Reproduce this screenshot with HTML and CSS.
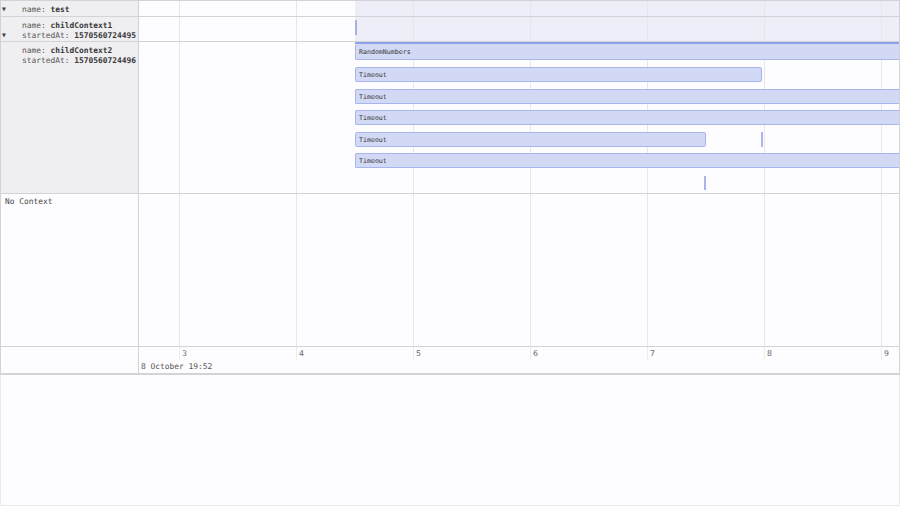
FILE: index.html
```html
<!DOCTYPE html>
<html>
<head>
<meta charset="utf-8">
<link rel="stylesheet" href="styles.css">
</head>
<body>
<div class="page">
  <div class="table">
    <div class="row r1">
      <div class="label">
        <div class="ln"><span class="tog">▼</span>name: <b>test</b></div>
      </div>
      <div class="tl lav"></div>
    </div>
    <div class="row r2">
      <div class="label">
        <div class="ln"><span class="tog"></span>name: <b>childContext1</b></div>
        <div class="ln"><span class="tog">▼</span>startedAt: <b>1570560724495</b></div>
      </div>
      <div class="tl lav">
        <div class="ctx-mark"></div>
      </div>
    </div>
    <div class="row r3">
      <div class="label">
        <div class="ln"><span class="tog"></span>name: <b>childContext2</b></div>
        <div class="ln"><span class="tog"></span>startedAt: <b>1570560724496</b></div>
      </div>
      <div class="tl spans">
        <div class="ctx-line"></div>
        <div class="bar open first">RandomNumbers</div>
        <div class="tracks">
          <div class="track"><div class="bar" style="width:407px">Timeout</div></div>
          <div class="track"><div class="bar open">Timeout</div></div>
          <div class="track"><div class="bar open">Timeout</div></div>
          <div class="track"><div class="bar" style="width:351px">Timeout</div><div class="mark" style="margin-left:55px"></div></div>
          <div class="track"><div class="bar open">Timeout</div></div>
          <div class="track"><div class="mark low" style="margin-left:349px"></div></div>
        </div>
      </div>
    </div>
    <div class="row r4">
      <div class="label plain">
        <div class="ln nc">No Context</div>
      </div>
      <div class="tl"></div>
    </div>
    <div class="row axis">
      <div class="label plain"></div>
      <div class="axis-cell">
        <div class="ticks">
          <div class="tick">3</div>
          <div class="tick">4</div>
          <div class="tick">5</div>
          <div class="tick">6</div>
          <div class="tick">7</div>
          <div class="tick">8</div>
          <div class="tick">9</div>
        </div>
        <div class="date">8 October 19:52</div>
      </div>
    </div>
  </div>
  <div class="rest"></div>
</div>
</body>
</html>
```
FILE: styles.css
```css
html, body {
  margin: 0;
  padding: 0;
  background: #fdfcfe;
}
body {
  width: 900px;
  height: 506px;
  overflow: hidden;
}
.page {
  display: flex;
  flex-direction: column;
  height: 506px;
}
.table {
  border: 1px solid #d3d3d7;
  border-bottom: 2px solid #d3d3d7;
  font-family: "DejaVu Sans Mono", "Liberation Mono", monospace;
  font-size: 7.9px;
  color: #555;
}
.rest {
  flex: 1;
  border: 1px solid #ebeaee;
  border-top: none;
}
.row {
  display: grid;
  grid-template-columns: 138px 760px;
  border-bottom: 1px solid #d3d3d7;
  box-sizing: border-box;
}
.r1 { height: 16px; }
.r2 { height: 25px; }
.r3 { height: 152px; }
.r4 { height: 153px; }
.axis { height: 26px; border-bottom: none; }

.label {
  background: #efeef1;
  border-right: 1px solid #d3d3d7;
  padding-top: 4px;
  box-sizing: border-box;
}
.r4 .label { padding-top: 3px; }
.label.plain { background: #fdfcfe; }
.ln {
  line-height: 9.5px;
  white-space: nowrap;
}
.ln b {
  color: #383838;
  font-weight: bold;
}
.tog {
  display: inline-block;
  width: 20px;
  padding-left: 1px;
  font-size: 6.5px;
  color: #444;
  vertical-align: top;
}
.nc {
  padding-left: 4px;
  color: #444;
}

.tl {
  background-color: #fdfcfe;
  background-image: linear-gradient(to right, #e7e6eb 1px, transparent 1px);
  background-size: 117px 100%;
  background-position: 40px 0;
  background-repeat: repeat-x;
  padding-left: 216px;
  box-sizing: border-box;
  overflow: hidden;
}
.tl.lav {
  background-image:
    linear-gradient(to right, #e7e6eb 1px, transparent 1px),
    linear-gradient(to right, transparent 216px, #eeeef9 216px);
  background-size: 117px 100%, 100% 100%;
  background-position: 40px 0, 0 0;
  background-repeat: repeat-x, no-repeat;
}
.ctx-mark {
  margin-top: 3px;
  width: 2px;
  height: 15px;
  background: #a3b0ea;
}
.ctx-line {
  height: 2px;
  background: #8fa1e9;
}
.bar {
  box-sizing: border-box;
  height: 15px;
  background: #d2d9f5;
  border: 1px solid #a9b6ee;
  border-radius: 2px;
  font-size: 6.6px;
  color: #333;
  padding-left: 3px;
  padding-top: 1px;
  display: flex;
  align-items: center;
  white-space: nowrap;
  flex: none;
}
.track .bar.open {
  flex: 1;
}
.bar.open {
  border-right: none;
  border-radius: 2px 0 0 2px;
}
.bar.first {
  height: 16px;
  border-top: none;
}
.tracks {
  margin-top: 7px;
}
.track {
  height: 21.5px;
  display: flex;
  align-items: flex-start;
}
.mark {
  width: 2px;
  height: 15px;
  background: #a9b5ec;
  flex: none;
}
.mark.low {
  margin-top: 1.5px;
  height: 14px;
}

.axis-cell {
  padding-left: 40px;
  box-sizing: border-box;
  overflow: hidden;
}
.ticks {
  display: flex;
  height: 13px;
}
.tick {
  flex: none;
  width: 117px;
  box-sizing: border-box;
  border-left: 1px solid #eeedf1;
  padding-left: 2px;
  padding-top: 2px;
  font-family: "DejaVu Sans", sans-serif;
  font-size: 7.8px;
  line-height: 9px;
  color: #666;
}
.date {
  margin-left: -38px;
  line-height: 9.5px;
  color: #555;
  white-space: nowrap;
  padding-top: 2px;
}
```
